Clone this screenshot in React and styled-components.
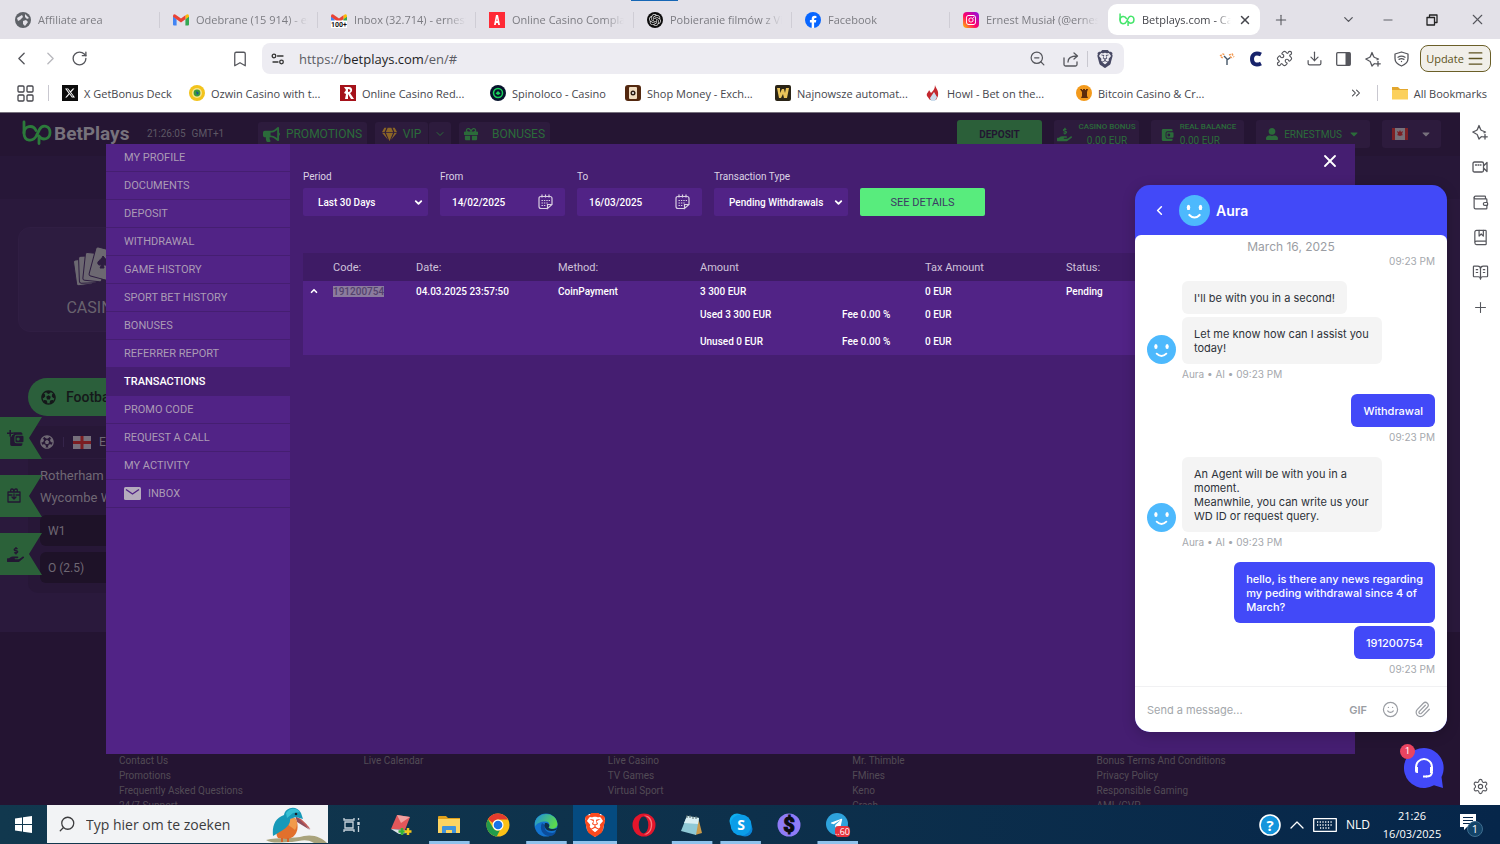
import { useState } from 'react';
import styled, { createGlobalStyle, css } from 'styled-components';
import {
  ChevronLeft, ChevronRight, ChevronDown, ChevronUp, ChevronsRight, X, Plus, Minus, RotateCw,
  Bookmark, ZoomOut, Puzzle, Download, Search, Smile, Paperclip, BookOpenText, BookMarked,
  Wallet, Settings, Menu,
} from 'lucide-react';
import { FaBullhorn, FaGem, FaGift, FaHandHoldingUsd, FaUserAlt, FaCaretDown, FaFutbol, FaTelegramPlane } from 'react-icons/fa';
import { SiBrave, SiOpenai, SiX, SiInstagram } from 'react-icons/si';

const GlobalStyle = createGlobalStyle`
  * {
    box-sizing: border-box;
  }
  body {
    margin: 0;
    font-family: Roboto, 'Liberation Sans', sans-serif;
  }
  button, input, select {
    font: inherit;
    color: inherit;
    margin: 0;
    padding: 0;
    border: 0;
    background: none;
  }
  button {
    cursor: pointer;
  }
  a {
    color: inherit;
    text-decoration: none;
  }
  svg {
    display: block;
    flex-shrink: 0;
  }
`;

const Page = styled.div`
  display: flex;
  flex-direction: column;
  height: 100vh;
  background: #fff;
`;

// Browser window
const Chrome = styled.header`
  flex: none;
  font-family: 'Open Sans', 'Noto Sans', sans-serif;
  font-size: 11px;
  color: #45464c;
`;

const TabStrip = styled.div`
  position: relative;
  display: flex;
  align-items: center;
  height: 39px;
  padding-left: 2px;
  background: #e3e1e8;

  &::before {
    content: '';
    position: absolute;
    top: 0;
    left: 42.1%;
    width: 47px;
    height: 1px;
    background: #1566b5;
  }
`;

const Tab = styled.a`
  display: flex;
  align-items: center;
  gap: 7px;
  flex: 0 1 158px;
  min-width: 0;
  height: 31px;
  padding: 0 10px 0 13px;
  color: #7c7c82;
  background: linear-gradient(#cfcdd5, #cfcdd5) no-repeat right center / 1px 16px;

  ${(props) => props.$last && css`
    background: none;
  `}

  ${(props) => props.$active && css`
    flex-basis: 152px;
    padding: 0 8px 0 11px;
    border-radius: 9px;
    background: #fff;
    color: #45464c;
  `}
`;

const TabTitle = styled.span`
  flex: 1;
  overflow: hidden;
  white-space: nowrap;
  mask-image: linear-gradient(to right, #000 82%, transparent);
`;

const IconButton = styled.button`
  display: flex;
  align-items: center;
  justify-content: center;
  flex: none;
  width: ${(props) => props.$w || 29}px;
  height: 30px;
  color: ${(props) => props.$color || '#55565c'};
`;

const WindowButtons = styled.div`
  display: flex;
  margin-left: auto;
`;

const Toolbar = styled.div`
  display: flex;
  align-items: center;
  height: 39px;
  padding: 0 9px 0 7px;
`;

const BookmarkSlot = styled.div`
  display: flex;
  justify-content: flex-end;
  flex: 1 1 162px;
  padding-right: 8px;
`;

const AddressBar = styled.form`
  display: flex;
  align-items: center;
  flex: 0 1 862px;
  height: 31px;
  padding: 0 2px 0 9px;
  border-radius: 8px;
  background: #edecf2;
`;

const Url = styled.label`
  flex: 1;
  padding-left: 14px;
  font-size: 13px;
  color: #5c5c64;

  b {
    font-weight: 400;
    color: #1f1f24;
  }
`;

const Divider = styled.span`
  width: 1px;
  height: 16px;
  background: #c9c8d0;
`;

const Extensions = styled.div`
  display: flex;
  justify-content: flex-end;
  flex: 1 1 290px;
  padding-right: 4px;
`;

const UpdateButton = styled.button`
  display: flex;
  align-items: center;
  justify-content: center;
  gap: 2px;
  width: 71px;
  height: 27px;
  border: 1px solid #6b5f28;
  border-radius: 8px;
  background: #f1efe9;
  color: #5e5320;
`;

const BookmarksBar = styled.nav`
  display: flex;
  align-items: center;
  height: 34px;
  padding: 0 13px 4px 17px;
`;

const BookmarkLink = styled.a`
  display: flex;
  align-items: center;
  gap: 6px;
  flex: 0 0 ${(props) => (props.$w ? `${props.$w}px` : 'auto')};
  white-space: nowrap;
`;

const BookmarksEnd = styled.div`
  display: flex;
  align-items: center;
  gap: 14px;
  margin-left: auto;
`;

const Middle = styled.div`
  display: flex;
  flex: 1;
  min-height: 0;
`;

const BrowserSidebar = styled.aside`
  display: flex;
  flex-direction: column;
  align-items: center;
  flex: 0 0 40px;
  gap: 5px;
  padding: 5px 0 4px;
  background: #fff;

  button:last-child {
    margin-top: auto;
  }
`;

// Site behind the dialog
const Site = styled.main`
  position: relative;
  flex: 1;
  min-width: 0;
  overflow: hidden;
  border-top: 1px solid #77717d;
  background: #2a193c;
`;

const SiteHeader = styled.div`
  display: flex;
  height: 43px;
  padding: 7px 19px 0 22px;
  background: #251533;
  box-shadow: 0 1px 3px #1d1029;
`;

const Brand = styled.a`
  display: flex;
  align-items: flex-start;
  flex: 0 0 125px;
  gap: 2px;
  font-size: 19px;
  line-height: 28px;
  font-weight: 700;
  color: #77727c;
`;

const Clock = styled.div`
  display: flex;
  gap: 6px;
  flex: 0 0 111px;
  font-size: 10px;
  line-height: 28px;
  color: #5e5865;
`;

const HeaderGroup = styled.div`
  display: flex;
  gap: ${(props) => props.$gap}px;
  margin-left: ${(props) => (props.$end ? 'auto' : 0)};
  padding-top: ${(props) => (props.$end ? 0 : 2)}px;
`;

const HeaderButton = styled.button`
  display: flex;
  align-items: center;
  justify-content: center;
  gap: ${(props) => props.$gap || 6}px;
  width: ${(props) => props.$w}px;
  height: 28px;
  padding-bottom: ${(props) => (props.$nav ? 4 : 0)}px;
  border-radius: 3px;
  background: ${(props) => (props.$solid ? '#2b5f39' : '#2d1b3d')};
  font-size: ${(props) => (props.$nav ? 12 : 10)}px;
  font-weight: ${(props) => (props.$solid ? 700 : 400)};
  color: ${(props) => (props.$solid ? '#221631' : '#2b6b3a')};
`;

const Balance = styled.span`
  display: grid;
  font-size: 8px;
  line-height: 14px;
  font-weight: 500;
  text-align: ${(props) => props.$align || 'left'};

  span {
    font-size: 10px;
    font-weight: 400;
  }
`;

const SplitButton = styled.div`
  display: flex;
  gap: 1px;
`;

const Strip = styled.div`
  height: 43px;
  background: #271738;
`;

const SiteBody = styled.div`
  display: flex;
  flex-direction: column;
  align-items: flex-start;
  height: 433px;
  padding: 28px 18px 0;
`;

const CategoryCard = styled.a`
  display: flex;
  flex-direction: column;
  align-items: center;
  gap: 12px;
  width: 154px;
  height: 105px;
  padding-top: 18px;
  border: 1px solid #301e43;
  border-radius: 12px;
  background: #2d1c40;
  font-size: 16px;
  color: #69636e;
`;

const SportPill = styled.a`
  display: flex;
  align-items: center;
  gap: 10px;
  width: 130px;
  height: 38px;
  margin: 46px 0 10px 10px;
  padding-left: 13px;
  border-radius: 19px;
  background: #2b5f3b;
  font-size: 14px;
  font-weight: 500;
  color: #15181a;
`;

const MatchCard = styled.div`
  width: 300px;
  height: 167px;
  margin-left: 10px;
  padding: 0 12px;
  border-radius: 10px;
  background: #271737;
  font-size: 13px;
  line-height: 22px;
  color: #6f6874;
`;

const League = styled.div`
  display: flex;
  align-items: center;
  gap: 8px;
  height: 33px;
  margin-bottom: 6px;
  border-bottom: 1px solid #2c1b3d;
  font-size: 12px;

  i {
    width: 1px;
    height: 10px;
    margin: 0 1px;
    background: #35244a;
  }
`;

const Odd = styled.button`
  display: block;
  width: 100%;
  height: 31px;
  margin-top: 6px;
  padding-left: 8px;
  border-radius: 6px;
  background: #1e1228;
  font-size: 12px;
  text-align: left;
`;

const Flags = styled.div`
  position: absolute;
  top: 304px;
  left: 0;
  display: grid;
  gap: 16px;
`;

const FlagButton = styled.button`
  display: flex;
  align-items: center;
  width: 42px;
  height: 42px;
  padding-left: 7px;
  background: #2b6139;
  clip-path: polygon(0 0, 100% 0, 29px 50%, 100% 100%, 0 100%);
  color: #231733;
`;

const SiteFooter = styled.footer`
  display: grid;
  grid-template-columns: repeat(5, 1fr);
  height: 200px;
  padding: 121px 119px 0;
  background: #241432;
  font-size: 10px;
  line-height: 15px;
  color: #524b55;

  a {
    display: block;
  }
`;

// Account dialog
const Dialog = styled.section`
  position: absolute;
  inset: 31px 105px 51px 106px;
  display: flex;
  background: #451e71;
  color: #fff;
`;

const AccountMenu = styled.nav`
  flex: 0 0 184px;
  overflow: hidden;
  background: #512386;
`;

const MenuItem = styled.a`
  display: flex;
  align-items: center;
  gap: 7px;
  height: 28px;
  padding-left: 18px;
  border-bottom: 1px solid #451e71;
  font-size: 11px;
  color: #ab9bb5;

  svg {
    color: #b5abbd;
  }

  ${(props) => props.$active && css`
    background: #451e71;
    color: #fff;
    font-weight: 500;
  `}
`;

const Panel = styled.div`
  position: relative;
  flex: 1;
  min-width: 0;
  padding: 26px 13px 0;
`;

const CloseButton = styled.button`
  position: absolute;
  top: 7px;
  right: 15px;
`;

const Filters = styled.form`
  display: flex;
  align-items: flex-end;
  gap: 12px;
  margin-bottom: 37px;
`;

const Field = styled.div`
  width: ${(props) => props.$w || 125}px;
  font-size: 10px;

  label {
    display: block;
    margin-bottom: 5px;
    line-height: 13px;
    color: #dcd2e4;
  }
`;

const Control = styled.div`
  display: flex;
  align-items: center;
  height: 28px;
  padding: 0 ${(props) => (props.$date ? 12 : 4)}px 0 ${(props) => (props.$date ? 12 : 15)}px;
  border-radius: 2px;
  background: #512386;
  font-weight: 500;

  select, input {
    flex: 1;
    width: 0;
    appearance: none;
    outline: none;
  }
`;

const DetailsButton = styled.button`
  width: 125px;
  height: 28px;
  border-radius: 2px;
  background: #58ec7d;
  font-size: 11px;
  color: #3c3a64;
`;

const Table = styled.table`
  width: 100%;
  table-layout: fixed;
  border-collapse: collapse;
  text-align: left;
  font-size: 10px;

  th, td {
    padding: 0;
  }

  thead {
    background: #3e1b65;
    font-size: 11px;
    color: #cfc2da;
  }

  th {
    height: 28px;
    font-weight: 400;
  }

  tbody {
    background: #512386;
    font-weight: 500;
  }
`;

const Row = styled.tr`
  height: ${(props) => props.$h}px;

  svg {
    margin-left: 6px;
  }
`;

const Selected = styled.mark`
  background: #8b7b9e;
  color: #53416d;
`;

// Chat widget
const Chat = styled.section`
  position: absolute;
  right: 13px;
  bottom: 73px;
  display: flex;
  flex-direction: column;
  width: 312px;
  border-radius: 15px;
  overflow: hidden;
  background: #4249f8;
  box-shadow: 0 3px 14px rgba(0, 0, 0, 0.2);
  font-family: Inter, sans-serif;
`;

const ChatHeader = styled.div`
  display: flex;
  align-items: center;
  height: 50px;
  padding-left: 17px;
  font-size: 14px;
  font-weight: 600;
  color: #fff;

  button {
    margin-right: 12px;
  }

  svg + span {
    margin-left: 6px;
  }
`;

const ChatBody = styled.div`
  padding: 4px 12px 11px;
  border-radius: 6px 6px 0 0;
  background: #fff;
`;

const ChatDate = styled.div`
  font-size: 12px;
  line-height: 16px;
  text-align: center;
  color: #9a9da3;
`;

const Messages = styled.div`
  display: flex;
  align-items: flex-end;
  gap: 6px;
  margin-top: 14px;
  justify-content: ${(props) => (props.$mine ? 'flex-end' : 'flex-start')};
`;

const BubbleStack = styled.div`
  display: flex;
  flex-direction: column;
  align-items: ${(props) => (props.$mine ? 'flex-end' : 'flex-start')};
  gap: 3px;
`;

const Bubble = styled.p`
  max-width: ${(props) => (props.$mine ? 212 : 200)}px;
  margin: 0;
  padding: 10px 12px 9px;
  border-radius: 6px;
  background: ${(props) => (props.$mine ? '#4249f8' : '#f4f4f4')};
  color: ${(props) => (props.$mine ? '#fff' : '#2d3239')};
  font-size: 11px;
  line-height: 14px;
  font-weight: ${(props) => (props.$mine ? 500 : 400)};
  white-space: pre-line;
`;

const Meta = styled.div`
  margin-top: ${(props) => (props.$first ? 0 : 4)}px;
  padding-left: 35px;
  font-size: 10px;
  line-height: 12px;
  text-align: ${(props) => (props.$mine ? 'right' : 'left')};
  color: #a5a8ad;
`;

const Composer = styled.form`
  display: flex;
  align-items: center;
  gap: 15px;
  height: 46px;
  padding: 0 16px 0 12px;
  border-top: 1px solid #f1f1f3;
  background: #fff;
  font-size: 11px;
  color: #9a9da3;

  input {
    flex: 1;
    min-width: 0;
    outline: none;

    &::placeholder {
      color: #a3a7ab;
      opacity: 1;
    }
  }

  button:first-of-type {
    font-weight: 600;
  }
`;

const ChatLauncher = styled.button`
  position: absolute;
  right: 15px;
  bottom: 16px;
`;

const UnreadBadge = styled.span`
  position: absolute;
  top: -3px;
  left: -3px;
  width: 15px;
  height: 15px;
  border-radius: 50%;
  background: #ea4460;
  font-size: 9px;
  line-height: 15px;
  text-align: center;
  color: #fff;
`;

// Windows taskbar
const Taskbar = styled.footer`
  display: flex;
  align-items: center;
  flex: 0 0 39px;
  background: linear-gradient(90deg, #11384e, #0d304b 50%, #06264a);
  font-family: 'Open Sans', 'Noto Sans', sans-serif;
  color: #fff;
`;

const SearchBox = styled.label`
  display: flex;
  align-items: center;
  gap: 10px;
  width: 281px;
  height: 38px;
  padding-left: 11px;
  align-self: flex-start;
  background: #f2f3f5;
  color: #3c3c3e;

  input {
    flex: 1;
    min-width: 0;
    font-size: 14px;
    outline: none;

    &::placeholder {
      color: #3c3c3e;
      opacity: 1;
    }
  }
`;

const AppRow = styled.div`
  display: flex;
  width: 534px;
  height: 39px;
`;

const AppButton = styled.button`
  display: flex;
  align-items: center;
  justify-content: center;
  flex: 1;
  margin: 0 2px;
  background: ${(props) => (props.$active ? '#054b80' : 'none')};
  box-shadow: ${(props) => (props.$open ? 'inset 0 -3px 0 #8fc2ec' : 'none')};
  clip-path: ${(props) => (props.$open && !props.$active ? 'inset(0 2px)' : 'none')};
`;

const Tray = styled.div`
  display: flex;
  align-items: center;
  gap: 9px;
  margin-left: auto;
  padding-right: 15px;
  font-size: 12px;
`;

const TrayClock = styled.time`
  width: 66px;
  margin-right: 5px;
  font-size: 11px;
  line-height: 18px;
  text-align: center;
`;

function Face({ size }) {
  return (
    <svg width={size} height={size} viewBox="0 0 30 30">
      <circle cx="15" cy="15" r="15" fill="#4db9fd" />
      <ellipse cx="9.2" cy="12" rx="1.7" ry="2.6" fill="#fff" />
      <ellipse cx="20.8" cy="12" rx="1.7" ry="2.6" fill="#fff" />
      <path d="M10 19.3q5 5 10 0" fill="none" stroke="#fff" strokeWidth="2" strokeLinecap="round" />
    </svg>
  );
}

function BetMark({ width, color }) {
  return (
    <svg width={width} viewBox="0 0 30 25" fill="none" stroke={color} strokeWidth="2.800" strokeLinecap="round" strokeLinejoin="round">
      <path d="M2 2v11c0 9 9.500 9 12.500 2.500l3-6C20.500 4 28 5.500 28 12.500s-7.500 8.500-11 3.500v7.500" />
      <path d="M2 13c0-7 9-9 12-2.500" />
    </svg>
  );
}

function WalletIcon({ size, plus }) {
  return (
    <svg width={size} height={size} viewBox="0 0 16 16">
      <path d="M3 3.500Q3 2 4.500 2H13q1.500 0 1.500 1.500v1H9Q7 4.500 7 6.500v4q0 2 2 2h5.500v1Q14.500 15 13 15H4.500Q3 15 3 13.500z" fill="currentColor" />
      <path d="M9 5.500h5.500q1 0 1 1v4q0 1-1 1H9q-1 0-1-1v-4q0-1 1-1zM10.500 7a1.500 1.500 0 1 0 0 3 1.500 1.500 0 0 0 0-3z" fill="currentColor" fillRule="evenodd" />
      {plus && <path d="M3 0v6M0 3h6" stroke="#2b6139" strokeWidth="3.500" />}
      {plus && <path d="M3 0v6M0 3h6" stroke="currentColor" strokeWidth="1.500" />}
    </svg>
  );
}

function Gmail({ badge }) {
  return (
    <svg width="16" height="16" viewBox="0 0 16 16">
      <path d="M0 4v8.500q0 1 1 1h2.600V7z" fill="#4285f4" />
      <path d="M16 4v8.500q0 1-1 1h-2.600V7z" fill="#34a853" />
      <path d="M16 4.200q0-2.600-2.300-1.800L12.400 3.500V7.200L16 4.700z" fill="#fbbc04" />
      <path d="M0 4.200q0-2.600 2.300-1.800L8 6.500l4.400-3.200v3.900L8 10.400 0 4.700z" fill="#ea4335" />
      {badge && (
        <>
          <path d="M0 8.500h16V16H0z" fill="#fff" />
          <text x="8" y="15" textAnchor="middle" fontFamily="Roboto, sans-serif" fontSize="7" fontWeight="700" fill="#111">100+</text>
        </>
      )}
    </svg>
  );
}

function Tile({ bg, color, round, children }) {
  return (
    <svg width="16" height="16" viewBox="0 0 16 16">
      <rect width="16" height="16" rx={round} fill={bg} />
      <g fill={color}>{children}</g>
    </svg>
  );
}

const facebook = (
  <svg width="16" height="16" viewBox="0 0 16 16">
    <circle cx="8" cy="8" r="8" fill="#0866ff" />
    <path d="M6.700 16v-5.500H4.900V8h1.800V6.900q0-3.200 3-3.200l1.700.2v2h-1q-1.300 0-1.300 1.200V8h2.200l-.4 2.500H9.100V16z" fill="#fff" />
  </svg>
);

const instagram = (
  <svg width="16" height="16" viewBox="0 0 16 16">
    <defs>
      <linearGradient id="insta" x1="0" y1="1" x2="1" y2="0">
        <stop offset="0" stopColor="#ffc400" />
        <stop offset=".45" stopColor="#ff0069" />
        <stop offset="1" stopColor="#8a10e8" />
      </linearGradient>
    </defs>
    <rect width="16" height="16" rx="4" fill="url(#insta)" />
    <SiInstagram x="3" y="3" size="10" color="#fff" />
  </svg>
);

const tabs = [
  { title: 'Affiliate area', icon: <Tile bg="#5f6268" round="8"><path d="M2 6l5-3 1 2-3 3-2 1zM8 9l3-1 2 2-3 4-2-2zM10 2l4 4-2 1-2-2z" fill="#e3e1e8" /></Tile> },
  { title: 'Odebrane (15 914) - ernest', icon: <Gmail /> },
  { title: 'Inbox (32.714) - ernestmus', icon: <Gmail badge /> },
  { title: 'Online Casino Complaints', icon: <Tile bg="#ff2a36" color="#fff" round="0"><path d="M5 13L7 3h2l2 10H9.200L8.800 11H7.200L6.800 13zM7.400 9h1.200L8 6z" fillRule="evenodd" /></Tile> },
  { title: 'Pobieranie filmów z Vimeo', icon: <Tile bg="#0c0c0c" round="8"><SiOpenai x="2" y="2" size="12" color="#ddd" /></Tile> },
  { title: 'Facebook', icon: facebook },
  { title: 'Ernest Musiał (@ernestmus)', icon: instagram },
];

const bookmarks = [
  { w: 127, title: 'X GetBonus Deck', icon: <Tile bg="#0b0b0b" round="0"><SiX x="3" y="3" size="10" color="#fff" /></Tile> },
  { w: 151, title: 'Ozwin Casino with t...', icon: <Tile bg="#f2c31c" round="8"><circle cx="8" cy="8" r="5" fill="#f9e48a" /><circle cx="8" cy="8" r="3.400" fill="#3c9a3a" /><path d="M7 6l3 2-2 2z" fill="#1c4f9a" /></Tile> },
  { w: 150, title: 'Online Casino Red...', icon: <Tile bg="#a5121a" color="#fff" round="0"><path d="M4 2h5c4 0 4 5 1 6l4 6h-3L8 9v5H5l1-5-2-1 2-3zM8 4v3c3 0 3-3 0-3z" fillRule="evenodd" /></Tile> },
  { w: 135, title: 'Spinoloco - Casino', icon: <Tile bg="#07122c" round="8"><circle cx="8" cy="8" r="4.500" fill="none" stroke="#1bd15b" strokeWidth="1.500" /><path d="M5.500 8.500L8 6l2.500 2.500L8 10z" fill="#1bd15b" /></Tile> },
  { w: 150, title: 'Shop Money - Exch...', icon: <Tile bg="#53280f" round="3"><rect x="4" y="2" width="8" height="12" rx="1" fill="#f0dcc0" /><circle cx="8" cy="8" r="2.500" fill="#2a1a12" /><circle cx="8" cy="8" r="1" fill="#fff" /></Tile> },
  { w: 150, title: 'Najnowsze automat...', icon: <Tile bg="#2a2416" color="#e9c35a" round="2"><path d="M2 3h3v5l2-4h2l1 4 1-5h3l-2 10H9L8 9l-2 4H4z" /></Tile> },
  { w: 151, title: 'Howl - Bet on the...', icon: <svg width="16" height="16" viewBox="0 0 16 16"><path d="M10 0c1 4 4 5 3 11l-2 4H5l-3-4c-1-3 2-4 2-6l2 3c2-2 4-4 4-8z" fill="#c3282f" /><path d="M9 7l3 5-2 4H6l-1-3z" fill="#cbdcec" /></svg> },
  { w: 150, title: 'Bitcoin Casino & Cr...', icon: <Tile bg="#f39a1c" round="8"><path d="M4 4h2v1h1V4h2v1h1V4h2l-1 3v4l1 2H5l1-2V7z" fill="#5b2b0c" /></Tile> },
];

const menu = ['MY PROFILE', 'DOCUMENTS', 'DEPOSIT', 'WITHDRAWAL', 'GAME HISTORY', 'SPORT BET HISTORY', 'BONUSES',
  'REFERRER REPORT', 'TRANSACTIONS', 'PROMO CODE', 'REQUEST A CALL', 'MY ACTIVITY', 'INBOX'];

const footerLinks = [
  ['Contact Us', 'Promotions', 'Frequently Asked Questions', '24/7 Support'],
  ['Live Calendar'],
  ['Live Casino', 'TV Games', 'Virtual Sport'],
  ['Mr. Thimble', 'FMines', 'Keno', 'Crash'],
  ['Bonus Terms And Conditions', 'Privacy Policy', 'Responsible Gaming', 'AML/CVP'],
];

const thin = { fill: 'none', stroke: 'currentColor', strokeWidth: 1.3, strokeLinecap: 'round', strokeLinejoin: 'round' };

const sparkle = (
  <svg width="16" height="16" viewBox="0 0 16 16" {...thin}>
    <path d="M10 12.500l-1.200.6L7 15l-1.500-3.800q-.3-.9-1.200-1.200L.8 8l3.500-1.500q.9-.3 1.200-1.200L7 1.500l1.500 3.800q.4.900 1.200 1.200L13.500 8l-1.500.8" />
    <path d="M13 10.500v4.500M10.800 12.800h4.500" />
  </svg>
);

const calendar = (
  <svg width="15" height="16" viewBox="0 0 15 16" fill="none" stroke="#d9cfe2" strokeWidth="1.200">
    <path d="M9.500 14.500H3q-2 0-2-2V4.500q0-2 2-2h9q2 0 2 2v6l-4.500 4v-4H14" />
    <path d="M4 .5v3M7.500.5v3M11 .5v3" />
    <path d="M3.500 6.500h8.500M3.500 9h7M3.500 11.500h4" strokeDasharray="1.400 1" />
  </svg>
);

const coverCards = (
  <svg width="46" height="40" viewBox="0 0 46 40" fill="#6c6871" stroke="#2d1c40" strokeWidth="1">
    <rect x="3" y="13" width="17" height="26" rx="2" transform="rotate(-8 11 26)" />
    <rect x="7" y="10" width="18" height="27" rx="2" transform="rotate(-2 15 24)" />
    <rect x="12" y="7" width="19" height="28" rx="2" transform="rotate(6 20 22)" />
    <rect x="20" y="2" width="20" height="30" rx="2" transform="rotate(15 28 18)" />
    <path d="M31 10c2 3 6 5 4 8-1 2-3 1-4 0l1 4h-4l2-4c-2 2-5 1-4-2 1-2 4-3 5-6z" fill="#2d1c40" />
  </svg>
);

// Taskbar icons
const folder = (
  <svg width="24" height="20" viewBox="0 0 24 20">
    <path d="M1 2q0-1 1-1h7l2 2h12v14H1z" fill="#e0a11b" />
    <path d="M1 4h22v14H1z" fill="#fcd462" />
    <path d="M5 18v-6q0-1 1-1h12q1 0 1 1v6h-4v-3H9v3z" fill="#3f93dc" />
  </svg>
);

const chromeLogo = (
  <svg width="24" height="24" viewBox="0 0 24 24">
    <circle cx="12" cy="12" r="11.500" fill="#fbc116" />
    <path d="M2 6.200A11.500 11.500 0 0 1 22 6.500H12a5.500 5.500 0 0 0-5 3.500z" fill="#e33b2e" />
    <path d="M2 6.200l5 8.600a5.500 5.500 0 0 0 7 2.300l-3.300 6.300A11.500 11.500 0 0 1 2 6.200z" fill="#229a4b" />
    <circle cx="12" cy="12" r="5.500" fill="#fff" />
    <circle cx="12" cy="12" r="4.300" fill="#1a73e8" />
  </svg>
);

const edgeLogo = (
  <svg width="24" height="24" viewBox="0 0 24 24">
    <defs>
      <linearGradient id="edge" x1="0" y1="0" x2="1" y2=".4">
        <stop offset="0" stopColor="#1d8fe0" />
        <stop offset="1" stopColor="#5bd84f" />
      </linearGradient>
    </defs>
    <circle cx="12" cy="12" r="11.500" fill="#1373cf" />
    <path d="M1 9C4-2 22-2 23.500 11c0 5-7 6-9 3.500 2-2 1-6-3-6-5 0-9 2-10.500 5z" fill="url(#edge)" />
    <path d="M8 10c-3 5 0 13 8 13 3 0 5-2 6-4-3 2-13 1-11-7z" fill="#0b4d9c" />
    <path d="M11 10c-2 6 4 10 11 7l2-2-4 1c-3 0-5 0-5.500-1.500 2-2 0-5-3.500-4.500z" fill="#0d304b" />
  </svg>
);

const operaLogo = (
  <svg width="24" height="24" viewBox="0 0 24 24">
    <circle cx="12" cy="12" r="11.500" fill="#e3152b" />
    <path d="M12 2.500a10 10 0 0 1 0 19c10 1.500 12-20 0-19z" fill="#f9797c" />
    <ellipse cx="11.500" cy="12" rx="4.800" ry="8.500" fill="#10324a" />
  </svg>
);

const notepad = (
  <svg width="24" height="22" viewBox="0 0 24 22">
    <path d="M18 3l4 16-7 2z" fill="#c99a4a" />
    <path d="M7 2l12 2-3 17L1 17z" fill="#8fc9d6" />
    <path d="M7 2l12 2-1 6L4 9z" fill="#d9eff3" />
    <path d="M7 1v3M10 1v3M13 2v3M16 2v3" stroke="#566" />
  </svg>
);

const cardGame = (
  <svg width="24" height="24" viewBox="0 0 24 24">
    <path d="M8 2l13 2-5 13-14-1z" fill="#e2575a" />
    <path d="M8 2l13 2-9 6z" fill="#f1a1a0" />
    <path d="M2 16l14 1 2 3-8 1z" fill="#dde3ea" />
    <path d="M13 15v7M9.500 18.500h7" stroke="#35b335" strokeWidth="2.500" />
    <path d="M19 15v7M15.500 18.500h7" stroke="#f3c61c" strokeWidth="2.500" />
  </svg>
);

const skype = (
  <svg width="24" height="24" viewBox="0 0 24 24">
    <circle cx="8" cy="8" r="7.500" fill="#0fb0f1" />
    <circle cx="16" cy="16" r="7.500" fill="#0a84d8" />
    <circle cx="12" cy="12" r="10.500" fill="#0b9ee9" />
    <text x="12" y="17" textAnchor="middle" fontFamily="Open Sans, sans-serif" fontSize="14" fontWeight="700" fill="#fff">S</text>
  </svg>
);

const dollar = (
  <svg width="24" height="24" viewBox="0 0 24 24">
    <circle cx="12" cy="12" r="11.500" fill="#8f7bf7" />
    <text x="12" y="19" textAnchor="middle" fontFamily="Roboto, sans-serif" fontSize="20" fontWeight="900" fill="#0b0b12" stroke="#0b0b12">$</text>
  </svg>
);

const telegram = (
  <svg width="26" height="26" viewBox="0 0 26 26">
    <circle cx="12" cy="12" r="11" fill="#2ea2db" />
    <FaTelegramPlane x="5" y="5" size="13" color="#fff" />
    <rect x="10" y="14" width="15" height="11" rx="4" fill="#e8323c" />
    <text x="17.500" y="23" textAnchor="middle" fontFamily="Open Sans, sans-serif" fontSize="9" fill="#fff">..60</text>
  </svg>
);

const taskView = (
  <svg width="18" height="16" viewBox="0 0 18 16" fill="none" stroke="#c9d4dc" strokeWidth="1.300">
    <path d="M1 1v2h10V1M1 15v-2h10v2M2 5h8v6H2zM15.500 1v2M15.500 9v6" />
    <path d="M15.500 5v3" strokeWidth="2.500" />
  </svg>
);

const kingfisher = (
  <svg width="64" height="37" viewBox="0 0 64 37">
    <path d="M2 34c12-3 28-1 38-4 10-2 18 2 23 7H50c-8-5-14-2-22-1-10 0-20 2-26-2z" fill="#a9a37c" />
    <path d="M33 12c4-2 16 14 13 11L33 15z" fill="#c25b55" />
    <path d="M31 9l15 15-13-8z" fill="#8f4d5c" />
    <path d="M14 32c-4-5 0-14 7-19l10-1c5 7 3 20-8 21z" fill="#e2702c" />
    <path d="M23 14l8-2c3 4 2 9 0 12-3-3-8-4-8-10z" fill="#f19a4b" />
    <path d="M9 30C8 20 11 12 20 9c1-7 12-11 17-2l2 6-7-2-6 2c1 7-7 11-17 17z" fill="#1799b8" />
    <path d="M22 7c3-5 10-6 14-1l-7 1-6 5z" fill="#36bfd3" />
    <circle cx="32" cy="8" r="1.300" fill="#16222b" />
    <path d="M18 32v4M24 32v4" stroke="#d6632a" strokeWidth="2" />
  </svg>
);

const apps = [
  { name: 'Task view', icon: taskView },
  { name: 'Solitaire', icon: cardGame },
  { name: 'Explorer', icon: folder, open: true },
  { name: 'Chrome', icon: chromeLogo },
  { name: 'Edge', icon: edgeLogo, open: true },
  { name: 'Brave', icon: <svg width="22" height="24" viewBox="0 0 22 24"><path d="M5 1h12l4 5-2 11-8 7-8-7L1 6z" fill="#fff" /><SiBrave size="24" x="-1" color="#fb4a1e" /></svg>, open: true, active: true },
  { name: 'Opera', icon: operaLogo },
  { name: 'Notepad', icon: notepad, open: true },
  { name: 'Skype', icon: skype, open: true },
  { name: 'Wallet', icon: dollar },
  { name: 'Telegram', icon: telegram, open: true },
];

function BrowserChrome() {
  return (
    <Chrome>
      <TabStrip>
        {tabs.map((tab, i) => (
          <Tab href="#" key={tab.title} $last={i === tabs.length - 1}>
            {tab.icon}
            <TabTitle>{tab.title}</TabTitle>
          </Tab>
        ))}
        <Tab href="#" $active>
          <BetMark width={16} color="#45e56b" />
          <TabTitle>Betplays.com - Casino</TabTitle>
          <X size={14} strokeWidth={2.5} />
        </Tab>
        <IconButton aria-label="New tab" $w={42}><Plus size={16} strokeWidth={1.6} /></IconButton>
        <WindowButtons>
          <IconButton aria-label="Search tabs" $w={36}><ChevronDown size={15} /></IconButton>
          <IconButton aria-label="Minimize" $w={44}><Minus size={14} strokeWidth={1.6} /></IconButton>
          <IconButton aria-label="Restore" $w={44}>
            <svg width="12" height="12" viewBox="0 0 12 12" {...thin} stroke="#222"><path d="M1 3.500h7.500V11H1zM3.500 3.500V1H11v7.500H8.500" /></svg>
          </IconButton>
          <IconButton aria-label="Close window" $w={46}><X size={17} strokeWidth={1.5} /></IconButton>
        </WindowButtons>
      </TabStrip>

      <Toolbar>
        <IconButton aria-label="Back"><ChevronLeft size={21} strokeWidth={1.6} /></IconButton>
        <IconButton aria-label="Forward" $color="#b9b9be"><ChevronRight size={21} strokeWidth={1.6} /></IconButton>
        <IconButton aria-label="Reload"><RotateCw size={17} strokeWidth={1.9} /></IconButton>
        <BookmarkSlot>
          <IconButton aria-label="Bookmark this page"><Bookmark size={18} strokeWidth={1.7} /></IconButton>
        </BookmarkSlot>
        <AddressBar>
          <svg width="14" height="14" viewBox="0 0 14 14" {...thin} stroke="#333"><circle cx="3" cy="4" r="1.800" /><path d="M6.500 4H12M2 10h5" /><circle cx="10.500" cy="10" r="1.800" /></svg>
          <Url>https://<b>betplays.com</b>/en/#</Url>
          <IconButton type="button" aria-label="Zoom" $w={34}><ZoomOut size={17} strokeWidth={1.7} /></IconButton>
          <IconButton type="button" aria-label="Share" $w={33}>
            <svg width="16" height="16" viewBox="0 0 16 16" {...thin}><path d="M1 7v6.500q0 1.500 1.500 1.500h10q1.500 0 1.500-1.500V11M5 11c0-4 3-6 9-6M11 2l3.500 3L11 8" /></svg>
          </IconButton>
          <Divider />
          <IconButton type="button" aria-label="Shields" $w={34} $color="#484964"><SiBrave size={18} /></IconButton>
        </AddressBar>
        <Extensions>
          <IconButton aria-label="Extension">
            <svg width="16" height="14" viewBox="0 0 16 14" fill="none"><path d="M8 13V7L5 4M8 8l4-3" stroke="#456" strokeWidth="1.400" /><path d="M1 4l3-2 2 1M10 3l3-1 2 3M2 5l2 1M11 5l3 1" stroke="#f39a52" strokeWidth="1.500" strokeDasharray="2 1" /></svg>
          </IconButton>
          <IconButton aria-label="Extension">
            <svg width="14" height="16" viewBox="0 0 14 16" fill="none" stroke="#17236b" strokeWidth="4"><path d="M12 3.500C7 1 3 3 3 8s4 7 9 4.500" /></svg>
          </IconButton>
          <IconButton aria-label="Extensions"><Puzzle size={17} strokeWidth={1.6} /></IconButton>
          <IconButton aria-label="Downloads" $w={30}><Download size={17} strokeWidth={1.7} /></IconButton>
          <IconButton aria-label="Side panel">
            <svg width="15" height="14" viewBox="0 0 15 14"><rect x=".7" y=".7" width="13.600" height="12.600" rx="1" {...thin} /><path d="M9.500 1H14v12H9.500z" fill="currentColor" /></svg>
          </IconButton>
          <IconButton aria-label="Assistant">{sparkle}</IconButton>
          <IconButton aria-label="VPN">
            <svg width="15" height="16" viewBox="0 0 15 16" {...thin}><path d="M7.500 1L14 3v4.500q0 5-6.500 7.500Q1 12.500 1 7.500V3zM4 6.200q3.500-2 7 0M5 8.300q2.500-1.200 5 0M7.500 10.300v.2" /></svg>
          </IconButton>
        </Extensions>
        <UpdateButton>Update<Menu size={19} strokeWidth={1.6} /></UpdateButton>
      </Toolbar>

      <BookmarksBar>
        <BookmarkLink href="#" $w={31} aria-label="Apps">
          <svg width="17" height="17" viewBox="0 0 17 17" {...thin}><rect x="1" y="1" width="6" height="6" rx="1" /><rect x="10" y="1" width="6" height="6" rx="1" /><rect x="1" y="10" width="6" height="6" rx="1" /><rect x="10" y="10" width="6" height="6" rx="1" /></svg>
        </BookmarkLink>
        <BookmarkLink as="span" $w={14}><Divider /></BookmarkLink>
        {bookmarks.map((item) => (
          <BookmarkLink href="#" key={item.title} $w={item.w}>
            {item.icon}
            {item.title}
          </BookmarkLink>
        ))}
        <BookmarksEnd>
          <ChevronsRight size={14} strokeWidth={1.8} />
          <Divider />
          <BookmarkLink href="#">
            <svg width="16" height="14" viewBox="0 0 16 14"><path d="M0 1h6l2 2h8v10H0z" fill="#e3a72e" /><path d="M0 4h16v9.500H0z" fill="#fbd05b" /></svg>
            All Bookmarks
          </BookmarkLink>
        </BookmarksEnd>
      </BookmarksBar>
    </Chrome>
  );
}

function Backdrop() {
  return (
    <>
      <SiteHeader>
        <Brand href="#"><BetMark width={30} color="#2c7a3b" />BetPlays</Brand>
        <Clock><span>21:26:05</span><span>GMT+1</span></Clock>
        <HeaderGroup $gap={8}>
          <HeaderButton $nav $w={109}><FaBullhorn size={17} />PROMOTIONS</HeaderButton>
          <SplitButton>
            <HeaderButton $nav $w={53}><FaGem size={15} color="#8b6526" />VIP</HeaderButton>
            <HeaderButton $nav $w={22} aria-label="VIP menu"><ChevronDown size={12} /></HeaderButton>
          </SplitButton>
          <HeaderButton $nav $w={91} $gap={14}><FaGift size={14} />BONUSES</HeaderButton>
        </HeaderGroup>
        <HeaderGroup $gap={12} $end>
          <HeaderButton $solid $w={85}>DEPOSIT</HeaderButton>
          <HeaderButton $w={85}>
            <FaHandHoldingUsd size={15} />
            <Balance $align="center">CASINO BONUS<span>0.00 EUR</span></Balance>
          </HeaderButton>
          <HeaderButton $w={93}>
            <WalletIcon size={15} />
            <Balance>REAL BALANCE<span>0.00 EUR</span></Balance>
          </HeaderButton>
          <HeaderButton $w={114}><FaUserAlt size={12} />ERNESTMUS<FaCaretDown size={12} /></HeaderButton>
          <HeaderButton $w={59} $gap={12} aria-label="Language">
            <svg width="16" height="12" viewBox="0 0 16 12"><path d="M0 0h16v12H0z" fill="#777079" /><path d="M0 0h3v12H0zM13 0h3v12h-3zM8 2l1 2 2-1-1 3 1 1-3 1v2H8V8L5 7l1-1-1-3 2 1z" fill="#7c1f24" /></svg>
            <FaCaretDown size={12} color="#77707c" />
          </HeaderButton>
        </HeaderGroup>
      </SiteHeader>
      <Strip />
      <SiteBody>
        <CategoryCard href="#">{coverCards}CASINO</CategoryCard>
        <SportPill href="#"><FaFutbol size={15} />Football</SportPill>
        <MatchCard>
          <League>
            <FaFutbol size={14} />
            <i />
            <svg width="18" height="13" viewBox="0 0 18 13"><path d="M0 0h18v13H0z" fill="#77707c" /><path d="M7.500 0h3v13h-3zM0 5h18v3H0z" fill="#7b1d22" /></svg>
            England
          </League>
          Rotherham<br />Wycombe W
          <Odd>W1</Odd>
          <Odd>O (2.5)</Odd>
        </MatchCard>
      </SiteBody>
      <SiteFooter>
        {footerLinks.map((column) => (
          <div key={column[0]}>
            {column.map((link) => <a href="#" key={link}>{link}</a>)}
          </div>
        ))}
      </SiteFooter>
      <Flags>
        <FlagButton aria-label="Wallet"><WalletIcon size={17} plus /></FlagButton>
        <FlagButton aria-label="Bonuses">
          <svg width="14" height="16" viewBox="0 0 14 16" {...thin}><path d="M1 4h12v10H1zM4 4Q3 1 5 1t2 3q0-3 2-3t1 3M1 7h4M9 7h4M7 6v5M5 9l2 2 2-2" /></svg>
        </FlagButton>
        <FlagButton aria-label="Cash out"><FaHandHoldingUsd size={17} /></FlagButton>
      </Flags>
    </>
  );
}

function AccountDialog() {
  const [period, setPeriod] = useState('Last 30 Days');
  const [type, setType] = useState('Pending Withdrawals');
  const [from, setFrom] = useState('14/02/2025');
  const [to, setTo] = useState('16/03/2025');

  return (
    <Dialog>
      <AccountMenu>
        {menu.map((item) => (
          <MenuItem href="#" key={item} $active={item === 'TRANSACTIONS'}>
            {item === 'INBOX' && <svg width="17" height="13" viewBox="0 0 17 13"><rect width="17" height="13" rx="1.500" fill="currentColor" /><path d="M2 2.500l6.500 4.500L15 2.500" fill="none" stroke="#512386" strokeWidth="1.400" /></svg>}
            {item}
          </MenuItem>
        ))}
      </AccountMenu>
      <Panel>
        <CloseButton aria-label="Close"><X size={20} strokeWidth={2.2} /></CloseButton>
        <Filters onSubmit={(e) => e.preventDefault()}>
          <Field>
            <label htmlFor="period">Period</label>
            <Control>
              <select id="period" value={period} onChange={(e) => setPeriod(e.target.value)}>
                <option>Last 30 Days</option>
              </select>
              <ChevronDown size={11} strokeWidth={4} />
            </Control>
          </Field>
          <Field>
            <label htmlFor="from">From</label>
            <Control $date>
              <input id="from" value={from} onChange={(e) => setFrom(e.target.value)} />
              {calendar}
            </Control>
          </Field>
          <Field>
            <label htmlFor="to">To</label>
            <Control $date>
              <input id="to" value={to} onChange={(e) => setTo(e.target.value)} />
              {calendar}
            </Control>
          </Field>
          <Field $w={134}>
            <label htmlFor="type">Transaction Type</label>
            <Control>
              <select id="type" value={type} onChange={(e) => setType(e.target.value)}>
                <option>Pending Withdrawals</option>
              </select>
              <ChevronDown size={11} strokeWidth={4} />
            </Control>
          </Field>
          <DetailsButton>SEE DETAILS</DetailsButton>
        </Filters>
        <Table>
          <colgroup>
            <col width="30" />
            <col width="83" />
            <col width="142" />
            <col width="142" />
            <col width="142" />
            <col width="83" />
            <col width="141" />
            <col />
          </colgroup>
          <thead>
            <tr>
              <th />
              <th>Code:</th>
              <th>Date:</th>
              <th>Method:</th>
              <th colSpan="2">Amount</th>
              <th>Tax Amount</th>
              <th>Status:</th>
            </tr>
          </thead>
          <tbody>
            <Row $h={20}>
              <td><ChevronUp size={10} strokeWidth={4} /></td>
              <td><Selected>191200754</Selected></td>
              <td>04.03.2025 23:57:50</td>
              <td>CoinPayment</td>
              <td colSpan="2">3 300 EUR</td>
              <td>0 EUR</td>
              <td>Pending</td>
            </Row>
            <Row $h={27}>
              <td colSpan="4" />
              <td>Used 3 300 EUR</td>
              <td>Fee 0.00 %</td>
              <td>0 EUR</td>
              <td />
            </Row>
            <Row $h={27}>
              <td colSpan="4" />
              <td>Unused 0 EUR</td>
              <td>Fee 0.00 %</td>
              <td>0 EUR</td>
              <td />
            </Row>
          </tbody>
        </Table>
      </Panel>
    </Dialog>
  );
}

function ChatWidget() {
  return (
    <>
      <Chat>
        <ChatHeader>
          <button aria-label="Back"><ChevronLeft size={15} strokeWidth={2.5} /></button>
          <Face size={31} />
          <span>Aura</span>
        </ChatHeader>
        <ChatBody>
          <ChatDate>March 16, 2025</ChatDate>
          <Meta $mine $first>09:23 PM</Meta>
          <Messages>
            <Face size={29} />
            <BubbleStack>
              <Bubble>I'll be with you in a second!</Bubble>
              <Bubble>Let me know how can I assist you today!</Bubble>
            </BubbleStack>
          </Messages>
          <Meta>Aura • AI • 09:23 PM</Meta>
          <Messages $mine>
            <Bubble $mine>Withdrawal</Bubble>
          </Messages>
          <Meta $mine>09:23 PM</Meta>
          <Messages>
            <Face size={29} />
            <Bubble>{'An Agent will be with you in a moment.\nMeanwhile, you can write us your WD ID or request query.'}</Bubble>
          </Messages>
          <Meta>Aura • AI • 09:23 PM</Meta>
          <Messages $mine>
            <BubbleStack $mine>
              <Bubble $mine>{'hello, is there any news regarding\nmy peding withdrawal since 4 of\nMarch?'}</Bubble>
              <Bubble $mine>191200754</Bubble>
            </BubbleStack>
          </Messages>
          <Meta $mine>09:23 PM</Meta>
        </ChatBody>
        <Composer>
          <input aria-label="Message" placeholder="Send a message..." />
          <button type="button">GIF</button>
          <button type="button" aria-label="Emoji"><Smile size={17} strokeWidth={1.7} /></button>
          <button type="button" aria-label="Attach"><Paperclip size={17} strokeWidth={1.7} /></button>
        </Composer>
      </Chat>
      <ChatLauncher aria-label="Open chat">
        <svg width="42" height="42" viewBox="0 0 42 42">
          <path d="M21 1a20 20 0 1 0 10 37.300L40 41l-1.500-11A20 20 0 0 0 21 1z" fill="#4249f8" />
          <path d="M13 23v-3a8 8 0 0 1 16 0v3M29 25q0 4.500-6 4.500" fill="none" stroke="#fff" strokeWidth="2" />
          <path d="M12 20h3v6h-1q-2 0-2-2zM30 20h-3v6h1q2 0 2-2zM20 28.500h4v2h-4z" fill="#fff" />
        </svg>
        <UnreadBadge>1</UnreadBadge>
      </ChatLauncher>
    </>
  );
}

function WindowsTaskbar() {
  return (
    <Taskbar>
      <IconButton aria-label="Start" $w={47} $color="#fff">
        <svg width="17" height="17" viewBox="0 0 17 17" fill="#fff"><path d="M0 2.500l7-1V8H0zM8 1.300L17 0v8H8zM0 9h7v6.500l-7-1zM8 9h9v8l-9-1.300z" /></svg>
      </IconButton>
      <SearchBox>
        <Search size={18} strokeWidth={1.7} transform="scale(-1 1)" />
        <input placeholder="Typ hier om te zoeken" />
        {kingfisher}
      </SearchBox>
      <AppRow>
        {apps.map((app) => (
          <AppButton key={app.name} aria-label={app.name} $open={app.open} $active={app.active}>{app.icon}</AppButton>
        ))}
      </AppRow>
      <Tray>
        <svg width="22" height="22" viewBox="0 0 22 22">
          <circle cx="11" cy="11" r="10" fill="#1495dc" stroke="#fff" strokeWidth="1.600" />
          <text x="11" y="16.500" textAnchor="middle" fontFamily="Open Sans, sans-serif" fontSize="15" fontWeight="700" fill="#fff">?</text>
        </svg>
        <svg width="14" height="8" viewBox="0 0 14 8" {...thin}><path d="M1 7l6-6 6 6" /></svg>
        <svg width="24" height="14" viewBox="0 0 24 14" {...thin}><path d="M.7.700h22.600v12.600H.7z" /><path d="M4 4h16M4 7h16M7 10h10" strokeDasharray="1.200 1.500" strokeLinecap="butt" /></svg>
        <span>NLD</span>
        <TrayClock>21:26<br />16/03/2025</TrayClock>
        <svg width="26" height="24" viewBox="0 0 26 24">
          <path d="M1 1h16v13H8l-3 3v-3H1z" fill="#fff" />
          <path d="M4 4.500h10M4 7.500h10M4 10.500h7" stroke="#06264a" strokeWidth="1.200" />
          <circle cx="16" cy="16" r="7.500" fill="#134368" stroke="#3f6e90" />
          <text x="16" y="20" textAnchor="middle" fontFamily="Open Sans, sans-serif" fontSize="11" fill="#fff">1</text>
        </svg>
      </Tray>
    </Taskbar>
  );
}

function App() {
  return (
    <Page>
      <GlobalStyle />
      <BrowserChrome />
      <Middle>
        <Site>
          <Backdrop />
          <AccountDialog />
          <ChatWidget />
        </Site>
        <BrowserSidebar>
          <IconButton aria-label="Assistant">{sparkle}</IconButton>
          <IconButton aria-label="Talk">
            <svg width="16" height="14" viewBox="0 0 16 14" {...thin}><path d="M1 3.500Q1 2 2.500 2H10q1.500 0 1.500 1.500v7Q11.500 12 10 12H2.500Q1 12 1 10.500zM11.500 6L15 2.500v9L11.500 8M3.500 5h1M6 5h1M8.500 5h.500" /></svg>
          </IconButton>
          <IconButton aria-label="Wallet"><Wallet size={17} strokeWidth={1.7} /></IconButton>
          <IconButton aria-label="Bookmarks"><BookMarked size={17} strokeWidth={1.7} /></IconButton>
          <IconButton aria-label="Reading list"><BookOpenText size={17} strokeWidth={1.7} /></IconButton>
          <IconButton aria-label="Add"><Plus size={17} strokeWidth={1.5} /></IconButton>
          <IconButton aria-label="Settings"><Settings size={17} strokeWidth={1.6} /></IconButton>
        </BrowserSidebar>
      </Middle>
      <WindowsTaskbar />
    </Page>
  );
}

export default App;
